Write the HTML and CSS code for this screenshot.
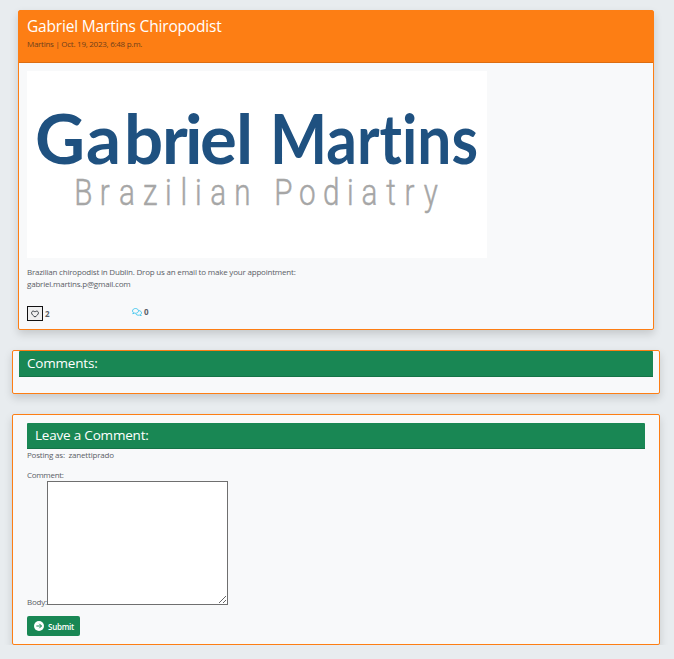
FILE: index.html
```html
<!DOCTYPE html>
<html lang="en">
<head>
<meta charset="utf-8">
<title>Gabriel Martins Chiropodist</title>
<link rel="stylesheet" href="styles.css">
</head>
<body>
<main>
  <article class="card post">
    <header class="post-header">
      <h1><span class="title">Gabriel Martins Chiropodist</span></h1>
      <p><span class="meta">Martins | Oct. 19, 2023, 6:48 p.m.</span></p>
    </header>
    <div class="post-body">
      <svg class="logo" viewBox="0 0 460 187" role="img" aria-label="Gabriel Martins Brazilian Podiatry">
        <g class="logo-name">
          <text x="8 59 97 135 158 173 209" y="93">Gabriel</text>
          <text x="243" y="93" textLength="208" lengthAdjust="spacingAndGlyphs">Martins</text>
        </g>
        <g class="logo-tag" transform="scale(.8 1)">
          <text x="59 91 115 145 172.500 192 210 229 259" y="134">Brazilian</text>
          <text x="309 340 370 400 418 449 472 496" y="134">Podiatry</text>
        </g>
      </svg>
      <p class="text">Brazilian chiropodist in Dublin. Drop us an email to make your appointment:<br>gabriel.martins.p@gmail.com</p>
      <div class="stats">
        <div class="likes">
          <button class="like" aria-label="Like"><svg viewBox="0 0 16 16"><path d="M8 14C3.500 10.700 1.200 8.500 1.200 5.700C1.200 3.600 2.700 2.200 4.500 2.200C6 2.200 7.200 3 8 4.200C8.800 3 10 2.200 11.500 2.200C13.300 2.200 14.800 3.600 14.800 5.700C14.800 8.500 12.500 10.700 8 14Z"/></svg></button>
          <span>2</span>
        </div>
        <div class="replies">
          <svg viewBox="0 0 20 16"><path d="M3 9.500C1.800 8.500 1 7.300 1 5.800C1 3.200 3.700 1 7 1S13 3.200 13 5.800S10.300 10.500 7 10.500C6.300 10.500 5.600 10.400 5 10.200L1.500 11.500ZM14.200 5.200C17 5.600 19 7.500 19 9.800C19 11.200 18.300 12.400 17.100 13.200L18.500 15.300L15 14.200C11.600 15 8.200 13.700 7.300 11.400"/></svg>
          <span>0</span>
        </div>
      </div>
    </div>
  </article>

  <section class="card comments">
    <h2 class="bar">Comments:</h2>
  </section>

  <section class="card leave">
    <h2 class="bar">Leave a Comment:</h2>
    <p class="posting">Posting as:&nbsp; zanettiprado</p>
    <form>
      <p class="label">Comment:</p>
      <div class="field"><label for="body">Body:</label><textarea id="body"></textarea></div>
      <button type="button" class="submit"><svg viewBox="0 0 16 16"><circle cx="8" cy="8" r="8"/><path d="M3.800 8H12M8.500 4.500L12 8L8.500 11.500"/></svg><span>Submit</span></button>
    </form>
  </section>
</main>
</body>
</html>
```
FILE: styles.css
```css
* { box-sizing: border-box; }
body {
  margin: 0;
  background: #e8ecef;
  color: #5a6066;
  font: 8px/12px "Open Sans", "Noto Sans", sans-serif;
  letter-spacing: -0.2px;
}
h1, h2, p { margin: 0; font-weight: 400; }
main { padding: 10px 14px 0 12px; }
.card {
  background: #f8f9fa;
  border: 1px solid #fd7e14;
  border-radius: 2px;
  box-shadow: 0 4px 8px rgba(0, 0, 0, .15);
}
.post { margin: 0 6px; height: 320px; }
.post-header {
  height: 52px;
  padding: 5px 8px 0;
  background: #fd7e14;
  border-bottom: 1px solid #dc6d12;
}
h1 { color: #fff; font-size: 15.5px; line-height: 20px; }
.title { letter-spacing: -0.18px; }
.meta { letter-spacing: -0.27px; }
.post-header p { color: #6f401c; margin-top: 2px; }
.post-body { padding: 8px; }
.logo { display: block; width: 460px; height: 187px; background: #fff; overflow: visible; }
.logo-name {
  fill: #1f5180;
  font: 700 69px Lato, sans-serif;
  letter-spacing: 0;
  font-variant-ligatures: none;
}
.logo-tag {
  fill: #a6a6a6;
  stroke: #a6a6a6;
  stroke-width: .5;
  font: 300 37px Roboto, sans-serif;
  letter-spacing: 0;
}
.text { margin-top: 8px; }
.stats { display: flex; margin-top: 16px; font-weight: 700; }
.likes { display: flex; width: 105px; gap: 2px; line-height: 15px; }
.like {
  display: grid;
  place-items: center;
  width: 16px;
  height: 15px;
  padding: 0;
  background: #efefef;
  border: 1px solid #111;
}
.like svg { width: 8px; height: 8px; fill: none; stroke: #343a40; stroke-width: 2; }
.replies { display: flex; align-items: center; gap: 2px; height: 12px; }
.replies svg { width: 10px; height: 8px; fill: none; stroke: #39c3ed; stroke-width: 1.8; }
.comments { height: 44px; margin-top: 20px; padding: 0 6px; }
.bar {
  height: 26px;
  padding: 0 8px;
  background: #198754;
  border-bottom: 1px solid #157347;
  border-radius: 1px 1px 0 0;
  color: #fff;
  font-size: 13.5px;
  line-height: 24px;
}
.leave { height: 231px; margin-top: 20px; padding: 8px 14px; }
.label { margin-top: 8px; letter-spacing: -0.3px; }
.field { display: flex; align-items: flex-end; }
.field label { width: 20px; line-height: 12px; margin-bottom: -3px; }
textarea {
  width: 181px;
  height: 124px;
  background: #fff;
  border: 1px solid #6f6f6f;
  resize: both;
}
.submit {
  display: flex;
  align-items: center;
  gap: 4px;
  width: 53px;
  height: 20px;
  margin-top: 11px;
  padding: 0 6px 0 7px;
  background: #198754;
  border: 0;
  border-radius: 2px;
  color: #fff;
  font: 600 8px "Open Sans", sans-serif;
  letter-spacing: -0.25px;
}
.submit svg { flex: none; width: 10px; height: 10px; fill: #fff; }
.submit path { fill: none; stroke: #198754; stroke-width: 1.6; }
```
